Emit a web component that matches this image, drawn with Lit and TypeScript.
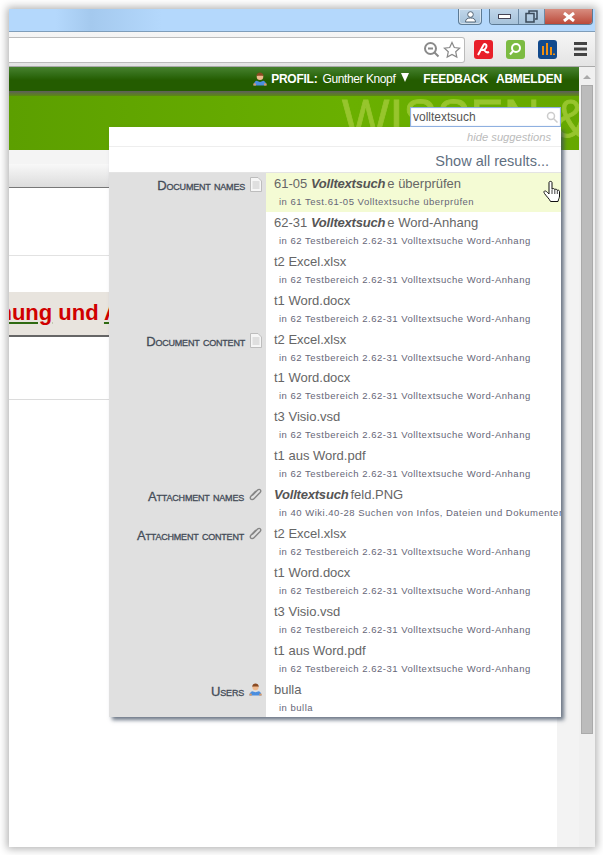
import { LitElement, html, css } from "lit";
import { customElement } from "lit/decorators.js";

const paper = html`<svg class="ic" width="12" height="15" viewBox="0 0 12 15"><path d="M.5.5h7.500l3.500 3.500v10.500h-11z" fill="#f6f6f6" stroke="#bdbdbd"/><path d="M2.500 5h7M2.500 7h7M2.500 9h7M2.500 11h7" stroke="#c8c8c8"/></svg>`;
const clip = html`<svg class="ic" width="13" height="13" viewBox="0 0 13 13"><path d="M3.200 7.600 8.600 2.100c1-1 2.200-.8 2.700-.2.600.7.600 1.700-.2 2.600L5 10.700c-1.100 1.100-2.600 1.100-3.300.3-.7-.9-.5-2 .4-3l4.800-4.900" fill="none" stroke="#858585" stroke-width="1.400"/></svg>`;
const user = (s = 13) => html`<svg class="ic" width="${s}" height="${s}" viewBox="0 0 12 12"><path d="M.5 11.500c0-2 1-3.500 2.500-4l3 1 3-1c1.500.5 2.500 2 2.500 4z" fill="#4a8ee0"/><rect x=".3" y="9.800" width="2.200" height="1.800" fill="#d89a68"/><rect x="9.500" y="9.800" width="2.200" height="1.800" fill="#d89a68"/><circle cx="6" cy="4" r="2.800" fill="#eeb98e"/><path d="M3 3.500C3 1.500 4.500.5 6 .5s3 1 3 3C7.500 3 5 3 3 3.500z" fill="#8a4a22"/></svg>`;

const sub62 = "in 62 Testbereich 2.62-31 Volltextsuche Word-Anhang";
const hit = html`<b>Volltextsuch</b>`;
const rows: { label?: string; icon?: any; title: any; sub: string; on?: boolean }[] = [
  { label: "Document names", icon: paper, title: html`61-05 ${hit}<span class="gap">e überprüfen</span>`, sub: "in 61 Test.61-05 Volltextsuche überprüfen", on: true },
  { title: html`62-31 ${hit}<span class="gap">e Word-Anhang</span>`, sub: sub62 },
  { title: "t2 Excel.xlsx", sub: sub62 },
  { title: "t1 Word.docx", sub: sub62 },
  { label: "Document content", icon: paper, title: "t2 Excel.xlsx", sub: sub62 },
  { title: "t1 Word.docx", sub: sub62 },
  { title: "t3 Visio.vsd", sub: sub62 },
  { title: "t1 aus Word.pdf", sub: sub62 },
  { label: "Attachment names", icon: clip, title: html`${hit}<span class="gap">feld.PNG</span>`, sub: "in 40 Wiki.40-28 Suchen von Infos, Dateien und Dokumenten" },
  { label: "Attachment content", icon: clip, title: "t2 Excel.xlsx", sub: sub62 },
  { title: "t1 Word.docx", sub: sub62 },
  { title: "t3 Visio.vsd", sub: sub62 },
  { title: "t1 aus Word.pdf", sub: sub62 },
  { label: "Users", icon: user(), title: "bulla", sub: "in bulla" },
];

@customElement("app-root")
export class AppRoot extends LitElement {
  static styles = css`
    :host { display: block; height: 855px; background: #fff; font-family: "Liberation Sans", Arial, sans-serif; overflow: hidden; }
    .outer { padding: 9px 8px 8px 9px; height: 855px; box-sizing: border-box; }
    .win { position: relative; height: 838px; display: flex; flex-direction: column; box-shadow: 0 0 8px 2px rgba(0,0,0,.3); background: #fff; overflow: hidden; }
    .title { height: 23px; flex: none; box-sizing: border-box; border-bottom: 1px solid #7f9db9; background: linear-gradient(90deg,#b4d8fc 0,#b4d8fc 8%,#a4c9ee 14%,#b4d8fc 26%,#b4d8fc 100%); display: flex; justify-content: flex-end; padding-right: 2px; }
    .capbtn { width: 22px; height: 15px; margin-right: 7px; border: 1px solid #5c7a94; border-top: 0; background: linear-gradient(#c0d6ea,#a6c2da); border-radius: 0 0 4px 4px; display: flex; align-items: center; justify-content: center; box-shadow: inset 0 0 0 1px rgba(255,255,255,.45); }
    .caps { display: flex; border: 1px solid #5c7a94; border-top: 0; border-radius: 0 0 4px 4px; height: 15px; overflow: hidden; }
    .cap { display: flex; align-items: center; justify-content: center; background: linear-gradient(#c0d6ea,#a6c2da); border-right: 1px solid #6d8aa5; }
    .cap.mn { width: 28px; }
    .cap.rs { width: 25px; }
    .cap.close { width: 47px; background: linear-gradient(#d88d80,#bb4a3a); border: 0; }
    .tool { height: 35px; flex: none; background: linear-gradient(#f6f6f6,#e4e4e4); border-bottom: 1px solid #aaa; display: flex; align-items: center; box-sizing: border-box; }
    .url { flex: none; width: 456px; height: 26px; margin-top: 1px; border: 1px solid #bbb; border-left: 0; border-radius: 0 3px 3px 0; background: #fff; box-sizing: border-box; display: flex; justify-content: flex-end; align-items: center; gap: 3px; padding-right: 3px; }
    .ext { display: flex; align-items: center; margin-left: 9px; gap: 13px; }
    .burger { margin-left: 17px; }
    .main { flex: 1; display: flex; min-height: 0; }
    .page { flex: none; width: 570px; display: flex; flex-direction: column; background: #fff; }
    .bar { height: 24px; flex: none; background: linear-gradient(#47812f 0,#2f6a12 35%,#245c00 55%,#245c00 100%); display: flex; justify-content: flex-end; align-items: center; gap: 8px; padding-right: 17px; color: #fff; font-size: 12px; font-weight: bold; letter-spacing: -.25px; box-sizing: border-box; }
    .bar .name { font-weight: normal; letter-spacing: -.4px; margin-left: 2px; }
    .prf { display: flex; align-items: center; gap: 4px; margin-right: 6px; }
    .tri { width: 0; height: 0; border: 4.500px solid transparent; border-top: 9px solid #fff; border-bottom: 0; margin: -3px 0 0 2px; }
    .shade { height: 5px; flex: none; background: linear-gradient(#5d5d5d,#5c8a10); }
    .banner { height: 54px; flex: none; position: relative; overflow: hidden; background: linear-gradient(90deg,#5c9f00,#6ab000 60%,#66a800); }
    .mark { position: absolute; left: 333px; top: -9px; font-size: 54px; line-height: 62px; color: #97c52d; -webkit-text-stroke: .8px #97c52d; white-space: nowrap; transform: scaleX(.93); transform-origin: left top; }
    .below { flex: 1; display: flex; min-height: 0; }
    .content { flex: none; width: 548px; display: flex; flex-direction: column; overflow: hidden; }
    .side { flex: 1; background: #f3f3f3; }
    .strip { height: 14px; flex: none; background: #f4f4f4; }
    .grad { height: 23px; flex: none; background: linear-gradient(#f8f8f8,#dcdcdc); border-bottom: 1px solid #777; }
    .sp1 { height: 67px; flex: none; border-bottom: 1px solid #e2e2e2; }
    .sp2 { height: 36px; flex: none; }
    .head { height: 43px; flex: none; background: #e8e4de; border-bottom: 2px solid #666; overflow: hidden; white-space: nowrap; color: #d00000; font-size: 22px; font-weight: bold; line-height: 41px; }
    .head div { margin-left: -68px; }
    .head u { text-decoration-color: #2f6a12; text-decoration-thickness: 2px; text-underline-offset: 2px; }
    .sp3 { height: 62px; flex: none; border-bottom: 1px solid #dcdcdc; }
    .scroll { flex: 1; background: #f0f0f0; padding: 0 2px; }
    .arrow { width: 0; height: 0; border: 4px solid transparent; border-bottom: 4px solid #aaa; border-top: 0; margin: 8px auto 6px; }
    .thumb { height: 649px; background: #bcbcbc; border: 1px solid #aaa; box-sizing: border-box; }
    .search { position: absolute; left: 401px; top: 98px; width: 151px; height: 20px; background: #fff; border: 1px solid #8fb0e0; box-shadow: inset 0 0 1px #8fb0e0; box-sizing: border-box; display: flex; align-items: center; justify-content: space-between; padding: 0 2px; font-size: 12px; color: #555; z-index: 3; }
    .pop { position: absolute; left: 100px; top: 118px; width: 452px; background: #fff; box-shadow: 3px 3px 4px rgba(60,75,95,.75); z-index: 2; }
    .hide { height: 19px; line-height: 21px; text-align: right; padding-right: 10px; color: #bbb; font-size: 11.200px; font-style: italic; border-bottom: 1px solid #eee; }
    .all { height: 25px; line-height: 28px; text-align: right; padding-right: 12px; color: #5f6f7f; font-size: 14.500px; border-bottom: 1px solid #e4e4e4; }
    .row { display: flex; height: 38.900px; }
    .lab { flex: none; width: 157px; background: #e0e0e0; display: flex; justify-content: flex-end; align-items: flex-start; gap: 5px; padding: 5px 4px 0 0; box-sizing: border-box; font-variant: small-caps; font-size: 13px; letter-spacing: -.2px; color: #444c58; }
    .lab span { -webkit-text-stroke: .3px #444c58; }
    .lab .ic { margin-top: -1px; }
    .res { flex: 1; min-width: 0; padding-left: 8px; overflow: hidden; white-space: nowrap; }
    .on { background: #f4fbd4; }
    .t { font-size: 13px; color: #666; line-height: 17px; margin-top: 2px; }
    .t b { font-style: italic; color: #555; letter-spacing: -.2px; }
    .gap { margin-left: 2px; }
    .s { font-size: 9.500px; color: #667; letter-spacing: .5px; padding-left: 5px; line-height: 12px; margin-top: 4px; }
    .cursor { position: absolute; left: 534px; top: 171px; z-index: 4; }
  `;

  render() {
    return html`<div class="outer"><div class="win">
      <div class="title">
        <div class="capbtn"><svg width="13" height="12" viewBox="0 0 13 12"><circle cx="6.500" cy="3.500" r="2.800" fill="#fff" stroke="#567"/><path d="M1.500 11c0-3 2-4 5-4s5 1 5 4z" fill="#fff" stroke="#567"/></svg></div>
        <div class="caps">
          <div class="cap mn"><svg width="13" height="5"><rect x=".5" y=".5" width="12" height="4" fill="#fff" stroke="#445"/></svg></div>
          <div class="cap rs"><svg width="13" height="13" viewBox="0 0 13 13" fill="none" stroke="#3a4a5a" stroke-width="1.500"><rect x="1" y="3.500" width="8" height="8.500"/><path d="M4 3V1h8v8h-2"/></svg></div>
          <div class="cap close"><svg width="14" height="10" viewBox="0 0 14 10"><path d="M2 1l10 8M12 1L2 9" stroke="#fff" stroke-width="3"/></svg></div>
        </div>
      </div>
      <div class="tool">
        <div class="url">
          <svg width="17" height="17" viewBox="0 0 17 17" fill="none" stroke="#8a8a8a" stroke-width="2"><circle cx="7.500" cy="7.500" r="5.500"/><path d="M11.500 11.500l4 4M5 7.500h5"/></svg>
          <svg width="18" height="18" viewBox="0 0 18 18"><path d="M9 1.500l2.300 5 5.300.6-3.900 3.600 1.100 5.400L9 13.400l-4.800 2.700 1.100-5.400L1.400 7.100l5.300-.6z" fill="#fff" stroke="#888" stroke-width="1.200"/></svg>
        </div>
        <div class="ext">
          <svg width="19" height="19" viewBox="0 0 19 19"><rect width="19" height="19" rx="3" fill="#e8202a"/><path d="M4 15 9.500 5c1-1.500 3-1 3 1 0 3-3 4.500-5 4M10 10c1.500 2 3 3 5 2" fill="none" stroke="#fff" stroke-width="2"/></svg>
          <svg width="19" height="19" viewBox="0 0 19 19"><rect width="19" height="19" rx="3" fill="#7cbb42"/><circle cx="10" cy="8" r="4" fill="none" stroke="#fff" stroke-width="2"/><path d="M7 11l-3 3.500" stroke="#fff" stroke-width="2"/></svg>
          <svg width="19" height="19" viewBox="0 0 19 19"><rect width="19" height="19" rx="3" fill="#124a8c"/><path d="M4 6h2v9H4zM8 3h2v12H8zM12 7h2v8h-2zM15 13.500h2V15h-2z" fill="#f09010"/></svg>
        </div>
        <svg class="burger" width="13" height="14"><path d="M0 0h13v3H0zM0 5.500h13v3H0zM0 11h13v3H0z" fill="#444"/></svg>
      </div>
      <div class="main">
        <div class="page">
          <div class="bar"><div class="prf">${user(14)}<span>PROFIL: <span class="name">Gunther Knopf</span></span><div class="tri"></div></div><span>FEEDBACK</span><span>ABMELDEN</span></div>
          <div class="shade"></div>
          <div class="banner"><div class="mark">WISSEN &amp;</div></div>
          <div class="below">
            <div class="content">
              <div class="strip"></div>
              <div class="grad"></div>
              <div class="sp1"></div>
              <div class="sp2"></div>
              <div class="head"><div><u>Zeichnung</u> und <u>Anlagen</u></div></div>
              <div class="sp3"></div>
            </div>
            <div class="side"></div>
          </div>
        </div>
        <div class="scroll"><div class="arrow"></div><div class="thumb"></div></div>
      </div>
      <div class="search"><span>volltextsuch</span><svg width="12" height="12" viewBox="0 0 12 12" fill="none" stroke="#ccc" stroke-width="1.500"><circle cx="5" cy="5" r="3.500"/><path d="M7.500 7.500l4 4"/></svg></div>
      <div class="pop">
        <div class="hide">hide suggestions</div>
        <div class="all">Show all results...</div>
        ${rows.map((r) => html`<div class="row">
          <div class="lab">${r.label ? html`<span>${r.label}</span>${r.icon}` : ""}</div>
          <div class="res ${r.on ? "on" : ""}"><div class="t">${r.title}</div><div class="s">${r.sub}</div></div>
        </div>`)}
      </div>
      <svg class="cursor" width="18" height="23" viewBox="0 0 18 23"><path d="M6 2.500c0-1.500 3-1.500 3 0V9c1-.8 2.500-.5 2.800.5.900-.6 2.200-.2 2.500.8.900-.4 2.200 0 2.200 1.200v4.500c0 2-1 3-1.500 5.500H7.500C6.500 19 4 17 1.500 13.500.5 12 1 10.500 2.500 11 3.800 11.500 5 13 6 14z" fill="#fff" stroke="#111"/><path d="M9 9.500V14M11.800 9.500V14M14.300 10.500V14" stroke="#111" stroke-width=".8" fill="none"/></svg>
    </div></div>`;
  }
}
